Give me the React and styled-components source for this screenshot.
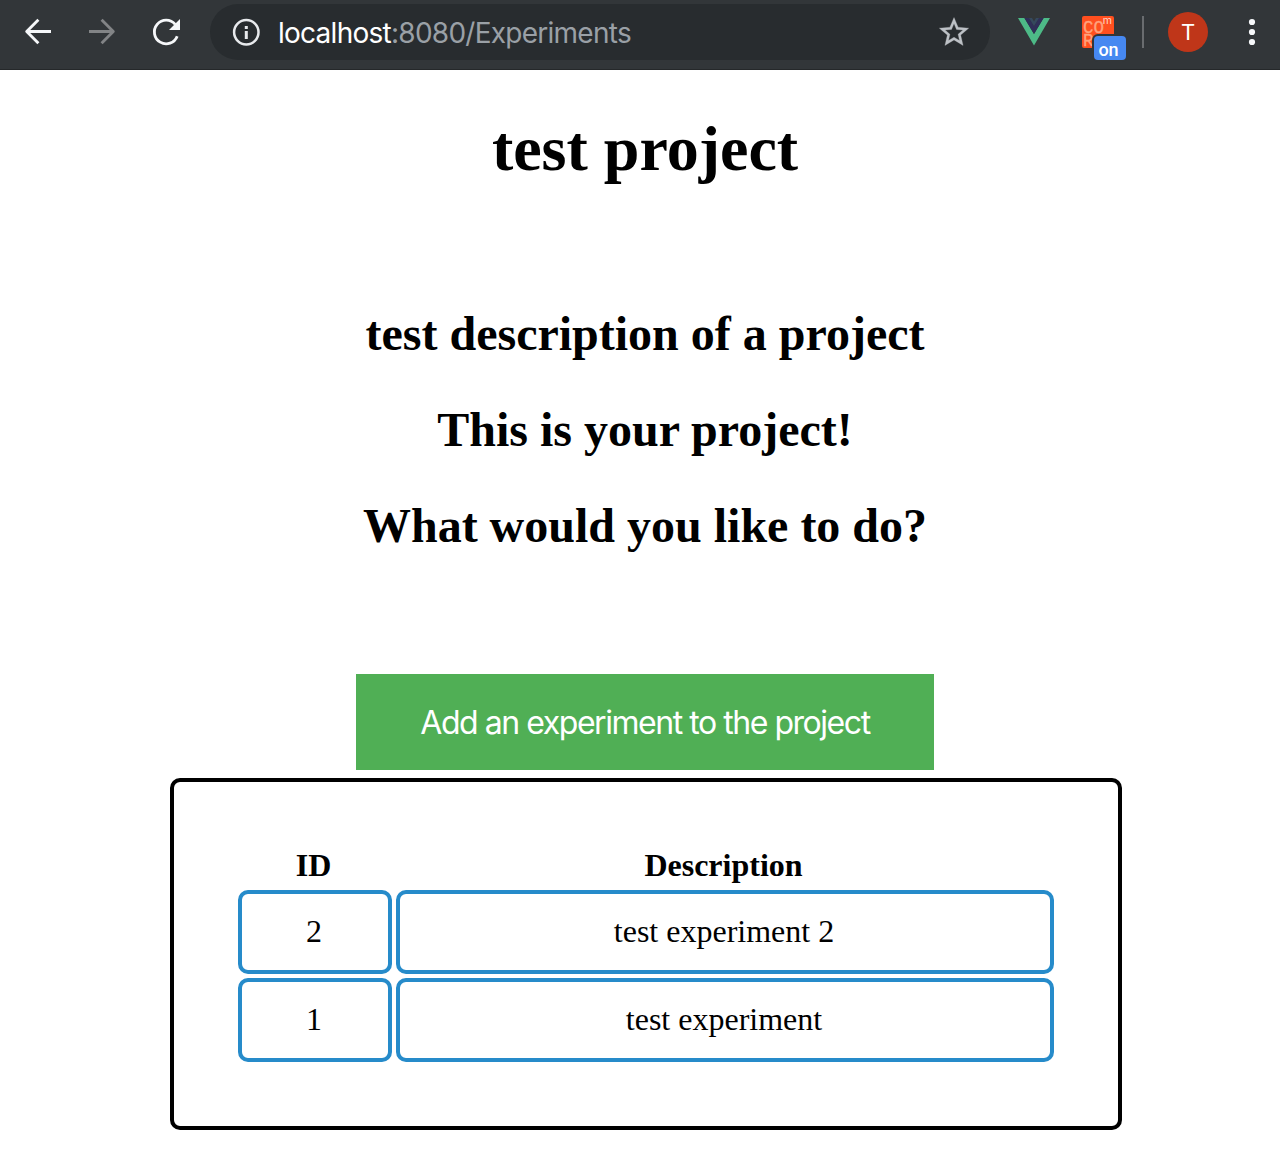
import React from "react";
import styled, { createGlobalStyle } from "styled-components";

const GlobalStyle = createGlobalStyle`
  * { box-sizing: border-box; }
  body {
    margin: 0;
    background: #fff;
    color: #000;
    font-family: "Liberation Serif", "Times New Roman", serif;
  }
`;

const Page = styled.div`
  width: 1280px;
  height: 1172px;
  overflow: hidden;
`;

const Toolbar = styled.header`
  display: flex;
  align-items: center;
  height: 70px;
  padding: 0 8px 5px 18px;
  background: #323639;
  border-bottom: 1px solid #25282a;
  font-family: Inter, "Liberation Sans", sans-serif;
`;

const IconButton = styled.span`
  display: flex;
  flex: none;
  width: 40px;
  height: 40px;
  margin-right: ${(p) => p.$gap}px;
  color: ${(p) => p.$color};

  svg { display: block; }
`;

const AddressBar = styled.div`
  display: flex;
  align-items: center;
  flex: none;
  width: 780px;
  height: 56px;
  padding: 0 16px;
  border-radius: 28px;
  background: #282c2f;
`;

const Url = styled.span`
  flex: 1;
  margin-left: 12px;
  padding-top: 1px;
  font-size: 28px;
  line-height: 34px;
  letter-spacing: -0.74px;
  white-space: nowrap;
  color: #9aa0a6;
`;

const Host = styled.span`
  color: #fff;
`;

const Extension = styled.span`
  position: relative;
  flex: none;
  width: 32px;
  height: 32px;
  margin-left: ${(p) => p.$left}px;

  svg { display: block; }
`;

const CorsTile = styled.span`
  position: relative;
  display: block;
  width: 32px;
  height: 32px;
  padding-top: 6px;
  border-radius: 2px;
  background: #ff4f1f;
  color: #ffa27c;
  font: 17.5px/12.5px "Liberation Mono", monospace;
  -webkit-text-stroke: 0.3px #ffa27c;
`;

const CorsLine = styled.span`
  display: block;
  padding-left: 1px;
`;

const CorsMark = styled.span`
  position: absolute;
  top: -2px;
  right: 2px;
  color: #ffd9c9;
  font: 10.5px/13px Inter, sans-serif;
  -webkit-text-stroke: 0;
`;

const Badge = styled.span`
  position: absolute;
  left: 12px;
  top: 20px;
  width: 32px;
  height: 24px;
  border-radius: 4px;
  background: #4688f1;
  box-shadow: 0 0 0 2px #323639;
  color: #fff;
  font: 500 18px/27px Roboto, sans-serif;
  text-align: center;
  padding-right: 3px;
`;

const Divider = styled.span`
  flex: none;
  width: 2px;
  height: 32px;
  margin-left: 28px;
  background: #696c6f;
`;

const Avatar = styled.span`
  flex: none;
  width: 40px;
  height: 40px;
  margin: 0 24px;
  border-radius: 50%;
  background: #bf3619;
  color: #fff;
  font: 22px/41px Roboto, sans-serif;
  text-align: center;
`;

const Content = styled.main`
  display: flex;
  flex-direction: column;
  align-items: center;
  padding-left: 10px;
`;

const Title = styled.h1`
  margin: 42px 0 0;
  font-size: 64px;
  line-height: 74px;
`;

const Subtitle = styled.h2`
  margin: ${(p) => p.$top}px 0 0;
  font-size: 48px;
  line-height: 56px;
`;

const AddButton = styled.button`
  width: 578px;
  height: 96px;
  margin-top: 120px;
  padding: 2px 0 0;
  border: 0;
  background: #50af55;
  color: #fff;
  font: 32px/38px Inter, "Liberation Sans", sans-serif;
  letter-spacing: -1.46px;
  white-space: nowrap;
`;

const Card = styled.section`
  width: 952px;
  height: 352px;
  margin: 8px 0 0 2px;
  padding: 64px;
  border: 4px solid #000;
  border-radius: 10px;
`;

const Table = styled.div`
  display: grid;
  grid-template-columns: 154px 658px;
  grid-template-rows: 40px 84px 84px;
  gap: 4px;
  font-size: 32px;
  line-height: 36px;
  text-align: center;
`;

const HeadCell = styled.div`
  padding: 1px 3px 0 0;
  font-weight: bold;
`;

const Cell = styled.div`
  padding: 19px 2px 0 0;
  border: 4px solid #268bca;
  border-radius: 10px;
`;

const experiments = [
  { id: 2, description: "test experiment 2" },
  { id: 1, description: "test experiment" },
];

function ArrowIcon({ forward }) {
  return (
    <svg width="40" height="40" viewBox="0 0 40 40" fill="none" stroke="currentColor" strokeWidth="2.9">
      <path
        d={forward ? "M7 19.5H31.5M19.6 7.8L31.3 19.5L19.6 31.2" : "M33 19.5H8.5M20.4 7.8L8.7 19.5L20.4 31.2"}
        strokeLinejoin="round"
        strokeLinecap="butt"
      />
    </svg>
  );
}

function ReloadIcon() {
  return (
    <svg width="40" height="40" viewBox="0 0 40 40">
      <path d="M31.2 24.2A11.8 11.8 0 1 1 29.2 12.4" fill="none" stroke="currentColor" strokeWidth="2.8" />
      <path d="M34 7V18H23Z" fill="currentColor" />
    </svg>
  );
}

function InfoIcon() {
  return (
    <svg width="40" height="40" viewBox="0 0 40 40" fill="none" stroke="currentColor">
      <circle cx="20.3" cy="20.3" r="12.2" strokeWidth="2.5" />
      <path d="M20.3 14V17M20.3 19V27" strokeWidth="3" />
    </svg>
  );
}

function StarIcon() {
  return (
    <svg width="40" height="40" viewBox="0 0 40 40">
      <path
        transform="translate(2.4 2.6) scale(1.467)"
        fill="currentColor"
        stroke="currentColor"
        strokeWidth="0.2"
        d="M22 9.24l-7.19-.62L12 2 9.19 8.63 2 9.24l5.46 4.73L5.82 21 12 17.27 18.18 21l-1.63-7.03L22 9.24zM12 15.4l-3.76 2.27 1-4.28-3.32-2.88 4.38-.38L12 6.1l1.71 4.04 4.38.38-3.32 2.88 1 4.28L12 15.4z"
      />
    </svg>
  );
}

function VueIcon() {
  return (
    <svg width="32" height="32" viewBox="0 0 32 32">
      <path d="M0 2H6.4L16 18L25.6 2H32L16 29.6Z" fill="#4dba87" />
      <path d="M6.4 2H11L16 10L21 2H25.6L16 18Z" fill="#2f2f58" />
      <path d="M11 2H14L16 5.4L18 2H21L16 10Z" fill="#35495e" />
    </svg>
  );
}

function MenuIcon() {
  return (
    <svg width="40" height="40" viewBox="0 0 40 40" fill="currentColor">
      <circle cx="20" cy="10" r="3.1" />
      <circle cx="20" cy="20" r="3.1" />
      <circle cx="20" cy="30" r="3.1" />
    </svg>
  );
}

export default function App() {
  return (
    <Page>
      <GlobalStyle />
      <Toolbar>
        <IconButton $color="#f6f8fa" $gap={24}><ArrowIcon /></IconButton>
        <IconButton $color="#828486" $gap={24}><ArrowIcon forward /></IconButton>
        <IconButton $color="#f6f8fa" $gap={24}><ReloadIcon /></IconButton>
        <AddressBar>
          <IconButton $color="#e8eaed" $gap={0}><InfoIcon /></IconButton>
          <Url><Host>localhost</Host>:8080/Experiments</Url>
          <IconButton $color="#bdc1c6" $gap={0}><StarIcon /></IconButton>
        </AddressBar>
        <Extension $left={28}><VueIcon /></Extension>
        <Extension $left={32}>
          <CorsTile>
            <CorsLine>CO</CorsLine>
            <CorsLine>R</CorsLine>
            <CorsMark>m</CorsMark>
          </CorsTile>
          <Badge>on</Badge>
        </Extension>
        <Divider />
        <Avatar>T</Avatar>
        <IconButton $color="#f6f8fa" $gap={0}><MenuIcon /></IconButton>
      </Toolbar>
      <Content>
        <Title>test project</Title>
        <Subtitle $top={120}>test description of a project</Subtitle>
        <Subtitle $top={40}>This is your project!</Subtitle>
        <Subtitle $top={40}>What would you like to do?</Subtitle>
        <AddButton>Add an experiment to the project</AddButton>
        <Card>
          <Table>
            <HeadCell>ID</HeadCell>
            <HeadCell>Description</HeadCell>
            {experiments.map((e) => (
              <React.Fragment key={e.id}>
                <Cell>{e.id}</Cell>
                <Cell>{e.description}</Cell>
              </React.Fragment>
            ))}
          </Table>
        </Card>
      </Content>
    </Page>
  );
}
